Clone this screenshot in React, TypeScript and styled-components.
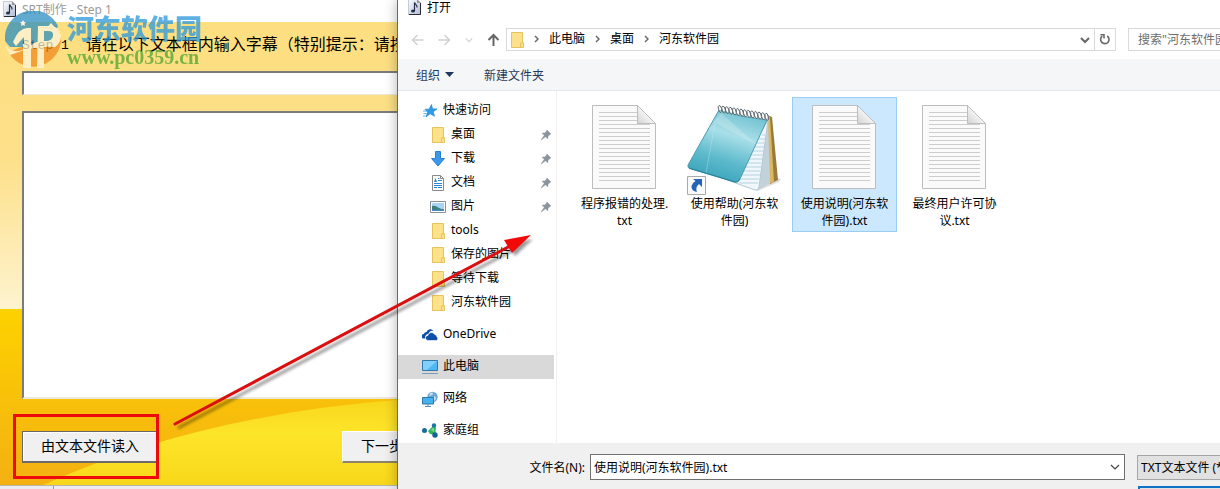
import React from 'react';
import styled, { createGlobalStyle } from 'styled-components';

const uiFont = '"Noto Sans", "Noto Sans CJK SC", sans-serif';
const songFont = '"Liberation Mono", "Noto Sans CJK SC", monospace';

const GlobalStyle = createGlobalStyle`
  * { box-sizing: border-box; }
  body { margin: 0; background: #fff; font-family: ${uiFont}; font-size: 12px; color: #000; overflow: hidden; }
  button, input, select, textarea { font: inherit; color: inherit; margin: 0; border-radius: 0; outline: none; }
  ul, ol { list-style: none; margin: 0; padding: 0; }
  a { color: inherit; text-decoration: none; }
  svg { display: block; flex: none; }
`;

const Desktop = styled.div`
  position: relative;
  display: grid;
  grid-template-columns: minmax(0, 397px) minmax(0, 1fr);
  grid-template-rows: minmax(0, 1fr);
  height: 100vh;
  overflow: hidden;
`;

/* ---------- maker window ---------- */

const MakerWindow = styled.section`
  display: flex;
  flex-direction: column;
  min-width: 0;
  overflow: hidden;
`;

const MakerTitle = styled.header`
  display: flex;
  align-items: center;
  gap: 6px;
  height: 22px;
  padding: 0 0 4px 3px;
  color: #9b9b9b;
  white-space: nowrap;
`;

const MakerForm = styled.form`
  position: relative;
  isolation: isolate;
  flex: 1;
  display: flex;
  flex-direction: column;
  min-height: 0;
  padding: 12px 0 22px 22px;
  background: linear-gradient(#fddf80, #fde08a 30%, #fdf3cf 62%, #fdd200 62%, #f4b012);
`;

const Scenery = styled.svg`
  position: absolute;
  inset: 0;
  z-index: -1;
  width: 100%;
  height: 100%;
`;

const StepLabel = styled.label`
  display: flex;
  align-items: center;
  gap: 17px;
  height: 24px;
  margin-bottom: 13px;
  font-family: ${songFont};
  font-size: 16px;
  line-height: 22px;
  white-space: nowrap;
`;

const StepName = styled.span`
  font-size: 13px;
`;

const TitleInput = styled.input`
  width: 100%;
  height: 24px;
  flex: none;
  margin-bottom: 16px;
  background: #fff;
  border: solid;
  border-width: 2px 0 1px 2px;
  border-color: #7b7b7b #fff #ece8dc #7b7b7b;
`;

const SubtitleArea = styled.textarea`
  width: 100%;
  flex: 1;
  min-height: 0;
  resize: none;
  background: #fff;
  border: solid;
  border-width: 2px 0 2px 2px;
  border-color: #7b7b7b #fff #ece8dc #7b7b7b;
`;

const MakerActions = styled.div`
  display: flex;
  gap: 183px;
  margin-top: 32px;
`;

const Highlighted = styled.div`
  position: relative;
  &::after {
    content: '';
    position: absolute;
    inset: -17px 0 -16px -9px;
    border: 3px solid #ee0a0c;
    pointer-events: none;
  }
`;

const ClassicButton = styled.button<{ $focused?: boolean }>`
  flex: none;
  width: 137px;
  height: 32px;
  padding: 0 0 3px 18px;
  text-align: left;
  white-space: nowrap;
  background: #f0f0f0;
  border: solid;
  border-width: 1px 1px 2px 1px;
  border-color: ${p => (p.$focused ? '#666 #777 #6b6b6b #666' : '#fff #777 #8b8468 #fff')};
  box-shadow: ${p => (p.$focused ? 'inset 1px 1px #fff' : 'none')};
  font-family: ${songFont};
  font-size: 14px;
`;

const StatusStrip = styled.footer`
  display: flex;
  height: 4px;
  background: #ececf0;
  border-top: 1px solid #b9b5ae;
  &::before {
    content: '';
    width: 53px;
    border-right: 1px solid #9a9a9a;
  }
`;

/* ---------- open dialog ---------- */

const Dialog = styled.section`
  position: relative;
  display: flex;
  flex-direction: column;
  min-width: 0;
  background: #fff;
  border-left: 1px solid #1f7ec4;
  box-shadow: 0 0 12px rgba(0, 0, 0, 0.3);
`;

const DialogTitle = styled.header`
  display: flex;
  align-items: center;
  gap: 6px;
  height: 13px;
  padding-left: 10px;
`;

const NavBar = styled.nav`
  display: flex;
  align-items: center;
  height: 23px;
  margin: 15px 0 8px;
  padding-left: 13px;
`;

const NavButtons = styled.div`
  display: flex;
  align-items: center;
  gap: 14px;
  margin-right: 6px;
`;

const IconButton = styled.button`
  display: grid;
  place-items: center;
  padding: 0;
  border: 0;
  background: none;
`;

const AddressBox = styled.div`
  flex: 1;
  min-width: 0;
  display: flex;
  align-items: center;
  height: 23px;
  padding-left: 4px;
  border: 1px solid #d9d9d9;
`;

const Crumbs = styled.ol`
  flex: 1;
  display: flex;
  align-items: center;
  line-height: 16px;
  padding-bottom: 2px;
  white-space: nowrap;
`;

const Crumb = styled.li`
  display: flex;
  align-items: center;
  gap: 10px;
  padding-left: 10px;
`;

const RefreshButton = styled(IconButton)`
  width: 21px;
  height: 21px;
  margin-left: 4px;
  border-left: 1px solid #d9d9d9;
`;

const SearchInput = styled.input`
  flex: none;
  width: 92px;
  height: 23px;
  margin-left: 12px;
  padding: 0 0 0 9px;
  border: 1px solid #d9d9d9;
  border-right: 0;
  background: #fff;
  &::placeholder { color: #6d6d6d; opacity: 1; }
`;

const CommandBar = styled.div`
  display: flex;
  align-items: center;
  gap: 30px;
  height: 32px;
  flex: none;
  padding-left: 18px;
  background: #f5f6f7;
  border-bottom: 1px solid #e3e6ea;
  color: #1e395b;
`;

const CommandButton = styled.button`
  display: flex;
  align-items: center;
  gap: 5px;
  padding: 0;
  border: 0;
  background: none;
`;

const Body = styled.div`
  display: flex;
  flex: none;
`;

const Sidebar = styled.nav`
  flex: none;
  width: 159px;
  padding: 8px 2px 0 0;
  border-right: 1px solid #f0f0f0;
`;

const Group = styled.ul`
  & + & { margin-top: 8px; }
`;

const SideLink = styled.a<{ $nested?: boolean; $selected?: boolean }>`
  display: flex;
  align-items: center;
  gap: 5px;
  height: 24px;
  padding: 0 2px 0 ${p => (p.$nested ? 32 : 24)}px;
  background: ${p => (p.$selected ? '#d9d9d9' : 'transparent')};
  white-space: nowrap;
  svg:last-child:not(:first-child) { margin-left: auto; }
`;

const SideName = styled.span`
  line-height: 18px;
  padding-bottom: 2px;
`;

const FileGrid = styled.ul`
  flex: 1;
  min-width: 0;
  display: flex;
  flex-wrap: wrap;
  align-content: flex-start;
  gap: 5px;
  padding: 6px 15px 0;
`;

const FileItem = styled.li<{ $selected?: boolean }>`
  display: flex;
  flex-direction: column;
  align-items: center;
  width: 105px;
  padding: 7px 0 2px;
  border: 1px solid ${p => (p.$selected ? '#99cdf5' : 'transparent')};
  background: ${p => (p.$selected ? '#cce8ff' : 'transparent')};
`;

const Thumb = styled.div`
  height: 90px;
`;

const FileName = styled.span`
  line-height: 17px;
  text-align: center;
  white-space: pre;
`;

const DialogFooter = styled.footer`
  flex: 1;
  display: grid;
  grid-template-columns: 187px minmax(0, 1fr) 83px;
  grid-auto-rows: max-content;
  gap: 6px 0;
  align-items: center;
  padding-top: 11px;
  background: #f0f0f0;
`;

const FieldLabel = styled.label`
  text-align: right;
`;

const Combo = styled.div`
  display: flex;
  align-items: center;
  height: 26px;
  margin: 0 12px 0 5px;
  padding: 0 4px 0 3px;
  border: 1px solid #707070;
  background: #fff;
`;

const NameInput = styled.input`
  flex: 1;
  min-width: 0;
  padding: 0;
  border: 0;
  background: none;
`;

const TypeSelect = styled.select`
  appearance: none;
  width: 100%;
  height: 25px;
  padding: 0 0 0 3px;
  border: 1px solid #a5a5a5;
  border-right: 0;
  background: #e1e1e1;
`;

const OpenButton = styled.button`
  grid-column: 3;
  height: 25px;
  margin-left: 1px;
  border: 2px solid #0f73c6;
  border-right: 0;
  background: #e1e1e1;
`;

/* ---------- overlays ---------- */

const Watermark = styled.div`
  position: absolute;
  top: 11px;
  left: 5px;
  display: flex;
  gap: 5px;
  opacity: 0.75;
  pointer-events: none;
`;

const SiteText = styled.div`
  display: flex;
  flex-direction: column;
  white-space: nowrap;
`;

const SiteName = styled.strong`
  font-family: "Noto Sans CJK SC", sans-serif;
  font-size: 27px;
  font-weight: 900;
  line-height: 34px;
  color: #2a98dc;
`;

const SiteUrl = styled.strong`
  font-family: "Liberation Serif", serif;
  font-size: 20px;
  line-height: 24px;
  color: #4fa52f;
`;

const ArrowLayer = styled.svg`
  position: absolute;
  top: 0;
  left: 0;
  pointer-events: none;
`;

/* ---------- icons ---------- */

const MusicFile = () => (
  <svg width="13" height="16" viewBox="0 0 13 16">
    <defs>
      <linearGradient id="mf" x1="0" y1="0" x2="1" y2="1">
        <stop offset="0" stopColor="#fff" />
        <stop offset="1" stopColor="#aebbd4" />
      </linearGradient>
    </defs>
    <path d="M0 0h9l4 4v12H0z" fill="url(#mf)" />
    <path d="M.5 16V.5H9" fill="none" stroke="#c3cad8" />
    <path d="M9 0l4 4H9z" fill="#999" />
    <path d="M12.500 4v11.500H1" fill="none" stroke="#2b2b38" />
    <path d="M6.500 12V3.500c.5 2 3 2.300 2.500 5" fill="none" stroke="#26304a" strokeWidth="1.200" />
    <ellipse cx="5" cy="12" rx="2" ry="1.500" fill="#26304a" />
  </svg>
);

const Arrow = ({ dir, color }: { dir: 'left' | 'right' | 'up'; color: string }) => {
  const turn = { left: 0, right: 180, up: 90 }[dir];
  const heavy = dir === 'up';
  return (
    <svg width="13" height="14" viewBox="0 0 13 14">
      <g transform={`rotate(${turn} 6.5 7)`}>
        <path d="M12.500 7H1.500M6.500 2L1.500 7l5 5" fill="none" stroke={color} strokeWidth={heavy ? 2 : 1.5} />
      </g>
    </svg>
  );
};

const ChevronRight = () => (
  <svg width="5" height="8" viewBox="0 0 5 8"><path d="M1 1l3 3-3 3" fill="none" stroke="#6a6a6a" strokeWidth="1.500" /></svg>
);

const ChevronDown = ({ color = '#666', width = 1.5, size = 10 }: { color?: string; width?: number; size?: number }) => (
  <svg width={size} height="8" viewBox="0 0 10 8"><path d="M1 2l4 4 4-4" fill="none" stroke={color} strokeWidth={width} /></svg>
);

const Refresh = () => (
  <svg width="12" height="13" viewBox="0 0 12 13">
    <path d="M8.200 3A4.200 4.200 0 1 1 3.200 3.200" fill="none" stroke="#666" strokeWidth="1.600" />
    <path d="M1.500 1.800H5v3.700" fill="none" stroke="#666" strokeWidth="1.500" />
  </svg>
);

const Folder = () => (
  <svg width="16" height="16" viewBox="0 0 16 16">
    <path d="M2.500.5h11v10h1v5h-12z" fill="#fce08a" stroke="#e6c35c" />
    <path d="M11.500 15.500v-4.500h2" fill="none" stroke="#e6c35c" />
  </svg>
);

const CrumbFolder = () => (
  <svg width="13" height="16" viewBox="0 0 13 16">
    <path d="M.5.5h11v10h1v5H.5z" fill="#fce08a" stroke="#e6c35c" />
    <path d="M9.500 15.500v-4.500h2" fill="none" stroke="#e6c35c" />
  </svg>
);

const Star = () => (
  <svg width="16" height="16" viewBox="0 0 16 16">
    <path d="M9.500 1.500l1 4.200 4.500.3-3.700 2.700 1.200 4.500-4.300-2.500L4 14l1.500-4.700L3 6.200h4z" fill="#2f9ce8" stroke="#1c7fd0" strokeWidth=".6" />
    <path d="M1 8h3M1.500 10.500h3M1 13h2.500" stroke="#5ab4f0" />
  </svg>
);

const Download = () => (
  <svg width="16" height="16" viewBox="0 0 16 16">
    <path d="M5.500.5h5v7h4L8 15 1.500 7.500h4z" fill="#3a98e8" stroke="#2a7fd0" />
  </svg>
);

const DocumentIcon = () => (
  <svg width="16" height="16" viewBox="0 0 16 16">
    <path d="M2.500.5h8l3 3v12h-11z" fill="#fff" stroke="#8a8a8a" />
    <path d="M10.500.5v3h3" fill="none" stroke="#8a8a8a" />
    <path d="M8 3.500h1.500M8 5.500h4M4 8.500h8M4 10.500h8M4 12.500h3M8 12.500h4" stroke="#2f86d0" />
    <path d="M4 7l1.500-4L7 7z" fill="#2f86d0" />
  </svg>
);

const PictureIcon = () => (
  <svg width="16" height="16" viewBox="0 0 16 16">
    <path d="M.5 2.500h15v11H.5z" fill="#fff" stroke="#8a8f96" />
    <path d="M2 4h12v8H2z" fill="#a8d4f6" />
    <path d="M2 7c3-1 5 1 7 2s3 1 5 1v2H2z" fill="#3c7f78" />
    <path d="M2 10.500h12V12H2z" fill="#4a86c0" />
  </svg>
);

const OneDrive = () => (
  <svg width="16" height="16" viewBox="0 0 16 16">
    <path d="M3 11.500H2A2.200 2.200 0 0 1 1.800 7 3 3 0 0 1 4.500 5a4 4 0 0 1 7-1.200c-3.500-.4-4.500 1.500-4.900 2.900C4 7 2.800 9 3 11.500z" fill="#0f4fa8" />
    <path d="M6 13.500a2.500 2.500 0 0 1-.2-5A3.700 3.700 0 0 1 12.700 7.500 2.800 2.800 0 0 1 15 10c1.500.8 1 3.500-.8 3.500z" fill="#0f4fa8" stroke="#fff" strokeWidth=".6" />
  </svg>
);

const Computer = () => (
  <svg width="16" height="16" viewBox="0 0 16 16">
    <path d="M.5 1.500h15v10H.5z" fill="#4db8f5" stroke="#3577a8" />
    <path d="M1 2h14L5 11H1z" fill="#7fd0fa" />
    <path d="M0 14.500h16" stroke="#7a9cb8" />
  </svg>
);

const Network = () => (
  <svg width="16" height="16" viewBox="0 0 16 16">
    <circle cx="10.500" cy="6" r="5.200" fill="#6aa6d4" />
    <path d="M8 2c2-1 3-.5 3 1s-3 1-4 3zM12 5c1 0 2 1 2 3l-2 2z" fill="#c5dff0" />
    <path d="M.5 6.500h11v6.500H.5z" fill="#45b2ee" stroke="#2f76ad" />
    <path d="M6 13v2M3 15.500h6" stroke="#5d93ba" />
  </svg>
);

const HomeGroup = () => (
  <svg width="16" height="16" viewBox="0 0 16 16">
    <path d="M6 8l6-6 2 3-1 7-5-1z" fill="#35b558" />
    <path d="M9 7l3-3v5z" fill="#83d695" />
    <circle cx="2.500" cy="7.500" r="2.500" fill="#1a6aa0" />
    <circle cx="12" cy="2.500" r="2.200" fill="#1b76a8" />
    <circle cx="13" cy="12" r="2.700" fill="#165f9e" />
  </svg>
);

const Pin = () => (
  <svg width="12" height="12" viewBox="0 0 12 12">
    <path d="M7 1l4 4-1.200.4L8 7.500l-.2 2.300L5.500 7.800 1 11l3.200-4.500L2.200 4.200l2.400-.2L6.600 2.200z" fill="#8c949c" stroke="#8c949c" strokeWidth=".5" />
  </svg>
);

const TextFile = () => (
  <svg width="65" height="85" viewBox="0 0 65 85">
    <defs>
      <linearGradient id="fold" x1="0" y1="1" x2="1" y2="0">
        <stop offset="0" stopColor="#d2d2d2" />
        <stop offset=".6" stopColor="#fafafa" />
      </linearGradient>
    </defs>
    <path d="M.5.5h45l18 18v65H.5z" fill="#fafafa" stroke="#bdbdbd" />
    {Array.from({ length: 18 }, (_, i) => (
      <path key={i} d={`M7 ${7.5 + i * 4}H${i < 3 ? 45 : 58}`} stroke="#cdcdcd" />
    ))}
    <path d="M45.500.5v18h18z" fill="url(#fold)" stroke="#bdbdbd" />
  </svg>
);

const Notepad = () => (
  <svg width="96" height="90" viewBox="0 0 96 90">
    <defs>
      <linearGradient id="cover" x1=".7" y1="0" x2=".35" y2="1">
        <stop offset="0" stopColor="#6dbfd0" />
        <stop offset=".35" stopColor="#a9dfe8" />
        <stop offset=".7" stopColor="#5cb9cc" />
        <stop offset="1" stopColor="#3aa3ba" />
      </linearGradient>
    </defs>
    <path d="M70 86l22-9 2-3-10-3z" fill="#ddd" />
    <path d="M80 10l5 2 6 63-8 4z" fill="#9a7a38" />
    <path d="M80 10l3 2 4 65-6 2z" fill="#d9b765" />
    <path d="M81 14l2 64-13 8-8-20z" fill="#c3d2da" />
    <path d="M18 67L68 85Q71 86 72 82L81 15 48 72z" fill="#f0f6f9" stroke="#b4c8d2" />
    <path d="M75 30h3M72 34h6M70 38h7M68 42h9M66 46h10M64 50h12M62 54h13M60 58h14M58 62h16M56 66h17M54 70h19M52 74h20M52 78h19" fill="none" stroke="#b5d3df" />
    <path d="M32 5L1 60Q0 63 4 64L48 77Q51 78 53 74L80 15Q56 13 32 5z" fill="url(#cover)" stroke="#4a9eb4" />
    <path d="M34 8L70 40 27 17z" fill="#fff" fillOpacity=".2" />
    <path d="M28 18L19 68" fill="none" stroke="#d8f1f6" strokeOpacity=".3" />
    <path d="M2 63l46 14q3 1 5-3" fill="none" stroke="#227f98" />
    {Array.from({ length: 14 }, (_, i) => (
      <ellipse
        key={i}
        cx={33 + i * 3.6}
        cy={4 + i * 0.6}
        rx="1.6"
        ry="3.6"
        fill="#fff"
        fillOpacity=".35"
        stroke="#5a666e"
        strokeWidth=".9"
        transform={`rotate(-15 ${33 + i * 3.6} ${4 + i * 0.6})`}
      />
    ))}
    <path d="M.5 71.500h18v18H.5z" fill="#fafafa" stroke="#aaa" />
    <path d="M6 74h9v8l-3-3q-4 3-2 8-6-1-5.500-6Q5 78 8.500 76z" fill="#2463b8" />
  </svg>
);

const SiteLogo = () => (
  <svg width="57" height="57" viewBox="0 0 57 57">
    <path d="M0 30A28 28 0 0 1 53 15L43 36H5z" fill="#2c8fc0" />
    <path d="M4 42Q17 33 28 36t28-10a28 28 0 0 1-52 16z" fill="#f08a1c" />
    <path d="M0 34Q10 47 28 33L46 12l9 10Q58 30 50 36 30 34 5 44z" fill="#fdf4da" />
    <path d="M8 31Q14 17 22 17h4v40h-8V27l-7 8z" fill="#fdf4da" />
    <path d="M14 33l5-7v7zM29 20h4v11h-4z" fill="#2c8fc0" />
    <path d="M33 15h10q13 0 12 10-1 10-14 10h-2v22h-7z" fill="#fdf4da" />
    <path d="M39 20h4q6 0 5 5t-7 5h-2z" fill="#2c8fc0" />
    <path d="M18 9l1 2 2 .3-1.500 1.400.4 2.300-1.900-1-1.900 1 .4-2.300L15 11.300l2-.3z" fill="#fff" />
  </svg>
);

/* ---------- data ---------- */

type SideEntry = { name: string; icon: React.ReactNode; nested?: boolean; pinned?: boolean; selected?: boolean };

const sideGroups: SideEntry[][] = [
  [
    { name: '快速访问', icon: <Star /> },
    { name: '桌面', icon: <Folder />, nested: true, pinned: true },
    { name: '下载', icon: <Download />, nested: true, pinned: true },
    { name: '文档', icon: <DocumentIcon />, nested: true, pinned: true },
    { name: '图片', icon: <PictureIcon />, nested: true, pinned: true },
    { name: 'tools', icon: <Folder />, nested: true },
    { name: '保存的图片', icon: <Folder />, nested: true },
    { name: '等待下载', icon: <Folder />, nested: true },
    { name: '河东软件园', icon: <Folder />, nested: true },
  ],
  [{ name: 'OneDrive', icon: <OneDrive /> }],
  [{ name: '此电脑', icon: <Computer />, selected: true }],
  [{ name: '网络', icon: <Network /> }],
  [{ name: '家庭组', icon: <HomeGroup /> }],
];

const files = [
  { name: '程序报错的处理.\ntxt', icon: <TextFile /> },
  { name: '使用帮助(河东软\n件园)', icon: <Notepad /> },
  { name: '使用说明(河东软\n件园).txt', icon: <TextFile />, selected: true },
  { name: '最终用户许可协\n议.txt', icon: <TextFile /> },
];

const crumbs = ['此电脑', '桌面', '河东软件园'];

export default function App() {
  return (
    <>
      <GlobalStyle />
      <Desktop>
        <MakerWindow>
          <MakerTitle><MusicFile />SRT制作 - Step 1</MakerTitle>
          <MakerForm onSubmit={e => e.preventDefault()}>
            <Scenery viewBox="0 0 397 463" preserveAspectRatio="none" aria-hidden="true">
              <defs>
                <linearGradient id="swoosh" x1="0" y1="0" x2="0" y2="1">
                  <stop offset="0" stopColor="#f8d71c" />
                  <stop offset=".4" stopColor="#fde52a" />
                  <stop offset="1" stopColor="#f8d71a" />
                </linearGradient>
              </defs>
              <path d="M43 463Q200 393 397 378v85z" fill="url(#swoosh)" />
            </Scenery>
            <StepLabel htmlFor="subtitle-title">
              <StepName>Step 1</StepName>请在以下文本框内输入字幕（特别提示：请按
            </StepLabel>
            <TitleInput id="subtitle-title" type="text" />
            <SubtitleArea aria-label="字幕" />
            <MakerActions>
              <Highlighted><ClassicButton type="button" $focused>由文本文件读入</ClassicButton></Highlighted>
              <ClassicButton type="submit">下一步</ClassicButton>
            </MakerActions>
          </MakerForm>
          <StatusStrip />
        </MakerWindow>

        <Dialog role="dialog" aria-label="打开">
          <DialogTitle><MusicFile />打开</DialogTitle>
          <NavBar>
            <NavButtons>
              <IconButton aria-label="后退"><Arrow dir="left" color="#d2d2d2" /></IconButton>
              <IconButton aria-label="前进"><Arrow dir="right" color="#d2d2d2" /></IconButton>
              <IconButton aria-label="最近的位置"><ChevronDown color="#d2d2d2" size={8} /></IconButton>
              <IconButton aria-label="上移"><Arrow dir="up" color="#666" /></IconButton>
            </NavButtons>
            <AddressBox>
              <CrumbFolder />
              <Crumbs>
                {crumbs.map(c => (
                  <Crumb key={c}><ChevronRight /><a href="#">{c}</a></Crumb>
                ))}
              </Crumbs>
              <IconButton aria-label="以前的位置"><ChevronDown width={2} /></IconButton>
              <RefreshButton aria-label="刷新"><Refresh /></RefreshButton>
            </AddressBox>
            <SearchInput type="text" aria-label="搜索" placeholder={'搜索"河东软件园"'} />
          </NavBar>
          <CommandBar>
            <CommandButton>
              组织
              <svg width="9" height="5" viewBox="0 0 9 5"><path d="M0 0h9L4.500 5z" fill="#1e395b" /></svg>
            </CommandButton>
            <CommandButton>新建文件夹</CommandButton>
          </CommandBar>
          <Body>
            <Sidebar>
              {sideGroups.map((group, i) => (
                <Group key={i}>
                  {group.map(entry => (
                    <li key={entry.name}>
                      <SideLink href="#" $nested={entry.nested} $selected={entry.selected}>
                        {entry.icon}
                        <SideName>{entry.name}</SideName>
                        {entry.pinned && <Pin />}
                      </SideLink>
                    </li>
                  ))}
                </Group>
              ))}
            </Sidebar>
            <FileGrid>
              {files.map(f => (
                <FileItem key={f.name} $selected={f.selected}>
                  <Thumb>{f.icon}</Thumb>
                  <FileName>{f.name}</FileName>
                </FileItem>
              ))}
            </FileGrid>
          </Body>
          <DialogFooter>
            <FieldLabel htmlFor="file-name">文件名(N):</FieldLabel>
            <Combo>
              <NameInput id="file-name" type="text" defaultValue="使用说明(河东软件园).txt" />
              <ChevronDown color="#444" width={1.2} />
            </Combo>
            <TypeSelect aria-label="文件类型"><option>TXT文本文件 (*.txt)</option></TypeSelect>
            <OpenButton type="button" aria-label="打开" />
          </DialogFooter>
        </Dialog>

        <ArrowLayer width="560" height="450" viewBox="0 0 560 450" aria-hidden="true">
          <defs>
            <filter id="soft" x="-10%" y="-10%" width="120%" height="120%"><feGaussianBlur stdDeviation="1.5" /></filter>
          </defs>
          <g transform="translate(3 4)" filter="url(#soft)" opacity=".4">
            <path d="M175 424L510 246" stroke="#000" strokeWidth="3" />
            <path d="M530 235l-26 5 8 12z" fill="#000" />
          </g>
          <path d="M175 424L510 246" stroke="#d90f10" strokeWidth="3" strokeLinecap="round" />
          <path d="M531 235l-27 5 8 13z" fill="#f20a0a" />
        </ArrowLayer>

        <Watermark>
          <SiteLogo />
          <SiteText>
            <SiteName>河东软件园</SiteName>
            <SiteUrl>www.pc0359.cn</SiteUrl>
          </SiteText>
        </Watermark>
      </Desktop>
    </>
  );
}
